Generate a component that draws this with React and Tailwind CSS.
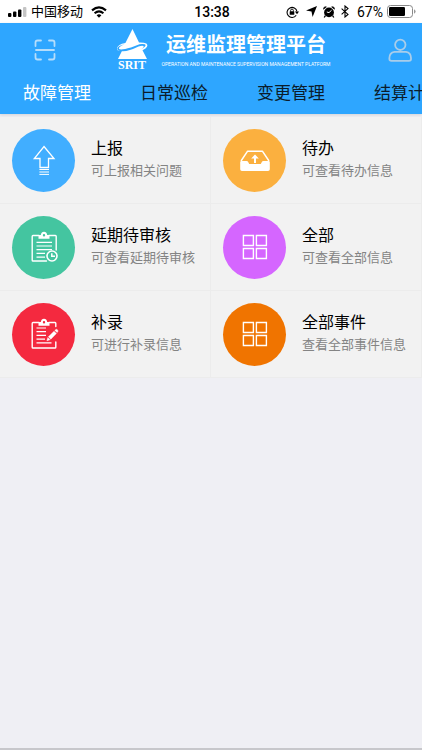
import React from "react";

const tabs = ["故障管理", "日常巡检", "变更管理", "结算计量"];

function UploadIcon() {
  return (
    <svg viewBox="0 0 32 32" className="size-8" fill="none" stroke="#fff" strokeWidth="1.3" aria-hidden="true">
      <path d="M16 2.5 26 14.5H20.5V23.5H12V14.5H6.3Z" />
      <path d="M11.4 25.5H21M11.4 28H21M11.4 30.4H21" strokeWidth="1" />
    </svg>
  );
}

function TrayIcon() {
  return (
    <svg viewBox="0 0 32 32" className="size-8" fill="none" stroke="#fff" aria-hidden="true">
      <path d="M2 17 8.6 7.2H23.4L30 17" strokeWidth="1.5" strokeLinejoin="round" />
      <path
        d="M1.2 18.2Q1.2 17 2.4 17H7.5Q8.8 17 9.3 18.2L10.2 20H21.8L22.7 18.2Q23.2 17 24.5 17H29.6Q30.8 17 30.8 18.2V25.3Q30.8 27 29 27H3Q1.2 27 1.2 25.3Z"
        fill="#fff"
        stroke="none"
      />
      <path d="M16 19V13" strokeWidth="2" />
      <path d="M16 10.5 19.8 14.6H12.2Z" fill="#fff" stroke="none" />
    </svg>
  );
}

function ClipboardBase({ frame, lines }) {
  return (
    <>
      <path d={frame} strokeWidth="1.4" strokeLinejoin="round" strokeLinecap="round" />
      <path
        d="M10.5 7.8V5.2Q10.5 4.1 11.8 4H12.8Q13.4 .8 16 .8T19.2 4H20.2Q21.5 4.1 21.5 5.2V7.8ZM16 3A1.2 1.2 0 1 0 16 5.4 1.2 1.2 0 0 0 16 3Z"
        fill="#fff"
        fillRule="evenodd"
        stroke="none"
      />
      <path d={lines} strokeWidth="1.2" />
    </>
  );
}

function ClipboardClockIcon() {
  return (
    <svg viewBox="0 0 32 32" className="size-8" fill="none" stroke="#fff" aria-hidden="true">
      <ClipboardBase
        frame="M11 4.5H5Q4.2 4.5 4.2 5.4V29.2Q4.2 30 5 30H18.5M21 4.5H27.4Q28.2 4.5 28.2 5.4V19"
        lines="M8.5 11.3H24M8.5 15H24M8.5 18.7H24M8.5 22.4H17M8.5 26.1H17"
      />
      <circle cx="24" cy="25" r="5" strokeWidth="1.6" />
      <path d="M23.8 22.3V25.3H27" strokeWidth="1.5" />
    </svg>
  );
}

function ClipboardPenIcon() {
  return (
    <svg viewBox="0 0 32 32" className="size-8" fill="none" stroke="#fff" aria-hidden="true">
      <ClipboardBase
        frame="M11 4.5H5Q4.2 4.5 4.2 5.4V29.2Q4.2 30 5 30H27Q27.8 30 27.8 29.2V24M21 4.5H27Q27.8 4.5 27.8 5.4V8.5"
        lines="M8.5 10H18M8.5 13.7H18M8.5 17.4H18M8.5 21.1H17M8.5 24.8H23.5"
      />
      <path
        d="M26 13.2 28.4 15.6 22.8 21.2 20.4 18.8ZM26.8 12.4 27.7 11.5Q28.6 10.9 29.4 11.7T29.9 13.6L29.2 14.6ZM19.8 19.6 22 21.8 18.9 22.8Z"
        fill="#fff"
        stroke="#fff"
        strokeWidth=".4"
      />
    </svg>
  );
}

function GridIcon() {
  return (
    <svg viewBox="0 0 32 32" className="size-8" fill="none" stroke="#fff" strokeWidth="1.4" aria-hidden="true">
      <path d="M4.4 4.5H14.4V14.5H4.4ZM17.4 4.5H27.4V14.5H17.4ZM4.4 17.5H14.4V27.5H4.4ZM17.4 17.5H27.4V27.5H17.4Z" />
    </svg>
  );
}

const items = [
  { title: "上报", note: "可上报相关问题", color: "bg-[#41aeff]", Icon: UploadIcon },
  { title: "待办", note: "可查看待办信息", color: "bg-[#fbb03f]", Icon: TrayIcon },
  { title: "延期待审核", note: "可查看延期待审核", color: "bg-[#44c5a0]", Icon: ClipboardClockIcon },
  { title: "全部", note: "可查看全部信息", color: "bg-[#d566ff]", Icon: GridIcon },
  { title: "补录", note: "可进行补录信息", color: "bg-[#f4293f]", Icon: ClipboardPenIcon },
  { title: "全部事件", note: "查看全部事件信息", color: "bg-[#f07400]", Icon: GridIcon },
];

function StatusBar() {
  return (
    <div className="grid h-[23px] grid-cols-[1fr_auto_1fr] items-center bg-white pr-1.5 pl-2 text-black">
      <div className="flex items-center">
        <svg viewBox="0 0 19 10" className="mr-1 h-[10px] w-[19px]" aria-hidden="true">
          <rect x="0" y="6" width="3.4" height="4" rx="1" />
          <rect x="5" y="4.4" width="3.4" height="5.6" rx="1" />
          <rect x="10" y="2.4" width="3.4" height="7.6" rx="1" />
          <rect x="15" y="0" width="3.4" height="10" rx="1" fill="#c4c4c4" />
        </svg>
        <span className="text-[13px] leading-5">中国移动</span>
        <svg viewBox="0 0 16 12" className="ml-2 h-3 w-4" fill="none" stroke="#000" strokeWidth="2.1" aria-hidden="true">
          <path d="M1 4.4Q8-1.8 15 4.4M3.6 7.2Q8 3.4 12.4 7.2" />
          <path d="M8 11.8 5.6 9.3Q8 7.4 10.4 9.3Z" fill="#000" stroke="none" />
        </svg>
      </div>
      <time className="text-[14px] leading-5 font-medium">13:38</time>
      <div className="flex items-center justify-end">
        <svg viewBox="0 0 14 12" className="mr-1.5 h-3 w-[14px]" fill="none" stroke="#000" aria-hidden="true">
          <path d="M10.2 9.3A5 5 0 1 1 11 5.5" strokeWidth="1.1" />
          <path d="M8.9 5.4H13.1L11 8.2Z" fill="#000" stroke="none" />
          <rect x="3.7" y="5.3" width="4.6" height="3.5" rx=".5" fill="#000" stroke="none" />
          <path d="M4.6 5.5V4.5A1.4 1.4 0 0 1 7.4 4.5V5.5" strokeWidth=".9" />
        </svg>
        <svg viewBox="0 0 10 10" className="mr-1.5 size-[11px]" aria-hidden="true">
          <path d="M10 0 6 10 5 5 0 4.2Z" />
        </svg>
        <svg viewBox="0 0 12 12" className="mr-1.5 size-3" aria-hidden="true">
          <circle cx="6" cy="6.4" r="4.9" />
          <path d="M.6 3.3A2 2 0 0 1 3.4.9ZM11.4 3.3A2 2 0 0 0 8.6.9Z" stroke="#000" strokeWidth=".6" />
          <path d="M2.4 9.6 1.2 11.5M9.6 9.6 10.8 11.5" stroke="#000" strokeWidth="1.3" />
          <path d="M8.6 4.2 6 6.6 3.8 6" stroke="#fff" strokeWidth="1" fill="none" />
        </svg>
        <svg viewBox="0 0 8 13" className="mr-1 h-[13px] w-2" fill="none" stroke="#000" strokeWidth="1.1" aria-hidden="true">
          <path d="M.6 3.6 7 9.4 4 12V1L7 3.6.6 9.4" />
        </svg>
        <span className="mr-1 ml-1 text-[14px] leading-5">67%</span>
        <svg viewBox="0 0 29 13" className="h-[13px] w-[29px]" aria-hidden="true">
          <rect x=".5" y=".5" width="25" height="12" rx="3" fill="#fff" stroke="#888" />
          <rect x="2" y="2" width="16" height="9" rx="1.2" />
          <path d="M27 4.3Q28.6 5 28.6 6.5T27 8.7Z" fill="#999" />
        </svg>
      </div>
    </div>
  );
}

function Brand() {
  return (
    <div className="flex items-center gap-3">
      <svg viewBox="0 0 36 42" className="h-[42px] w-9" fill="#fff" role="img" aria-label="SRIT">
        <path d="M18.5 0 25 13.5Q30 13.3 32.4 14.6 34.8 16.8 31.5 19.5L30.6 20 28.5 21.2 33 30H4L8.2 21.5Q4 22.6 3 20.5 2.2 17.5 8 14.8L11.4 13.9Z" />
        <path
          d="M10.5 15.3Q4.2 17.8 5 19.8 6.2 21.6 17 18.6L25.5 15.2Q31.6 14.6 31.6 16.3 31.2 18.4 26.4 20.5L28.3 19.4Q30.4 17.8 29.5 17.1 28 16.4 24.5 17.6 15 22.3 9 22.3 3.4 22.4 3.2 19.8 3.2 17 10.5 15.3Z"
          fill="#2ea6ff"
        />
        <text x="18" y="40" textAnchor="middle" className="font-['Liberation_Serif',serif] text-[12px] font-bold">
          SRIT
        </text>
      </svg>
      <div className="flex flex-col items-center whitespace-nowrap text-white">
        <h1 className="text-[20px] leading-6 font-bold">运维监理管理平台</h1>
        <p className="mt-1 text-[5px] leading-[6px]">OPERATION AND MAINTENANCE SUPERVISION MANAGEMENT PLATFORM</p>
      </div>
    </div>
  );
}

export default function App() {
  return (
    <div className="flex min-h-screen flex-col border-b-2 border-[#c7c7cb] bg-[#efeff4] font-['Roboto','Noto_Sans_CJK_SC',sans-serif]">
      <StatusBar />
      <header className="bg-[#2ea6ff] shadow-[0_1px_3px_rgba(0,0,0,0.12)]">
        <div className="flex h-[54px] items-center justify-between pr-2.5 pl-[34px]">
          <button type="button" aria-label="扫一扫">
            <svg viewBox="0 0 22 22" className="size-[22px]" fill="none" stroke="#b5ddfb" strokeWidth="1.8" strokeLinecap="round" aria-hidden="true">
              <path d="M1.5 7V3.5Q1.5 1.5 3.5 1.5H7M15 1.5H18.5Q20.5 1.5 20.5 3.5V7M20.5 15V18.5Q20.5 20.5 18.5 20.5H15M7 20.5H3.5Q1.5 20.5 1.5 18.5V15M2 11H20" />
            </svg>
          </button>
          <Brand />
          <button type="button" aria-label="我的">
            <svg viewBox="0 0 24 24" className="size-6" fill="none" stroke="#a9cdea" strokeWidth="1.8" aria-hidden="true">
              <circle cx="12.3" cy="6.8" r="5.2" />
              <path d="M6.5 13.8H18Q23 14.6 23 20V21Q23 22.9 21 22.9H3.5Q1.4 22.9 1.4 21V20Q1.4 14.6 6.5 13.8Z" />
            </svg>
          </button>
        </div>
        <nav className="flex h-[37px] gap-[49px] overflow-x-auto pl-[23px] text-[17px] leading-8 whitespace-nowrap [scrollbar-width:none]">
          {tabs.map((tab, index) => (
            <a key={tab} href="#" className={index === 0 ? "text-white" : "text-[#0b1c2b]"}>
              {tab}
            </a>
          ))}
        </nav>
      </header>
      <main className="mt-[3px] grid grid-cols-2">
        {items.map(({ title, note, color, Icon }) => (
          <button
            key={title}
            type="button"
            className="flex h-[87px] items-center gap-4 border-r border-b border-[#ececec] bg-[#f2f2f2] pl-3 text-left whitespace-nowrap"
          >
            <span className={`flex size-[63px] shrink-0 items-center justify-center rounded-full ${color}`}>
              <Icon />
            </span>
            <span className="flex flex-col">
              <span className="text-[16px] leading-[22px] text-black">{title}</span>
              <span className="text-[13px] leading-[22px] text-[#848484]">{note}</span>
            </span>
          </button>
        ))}
      </main>
    </div>
  );
}
